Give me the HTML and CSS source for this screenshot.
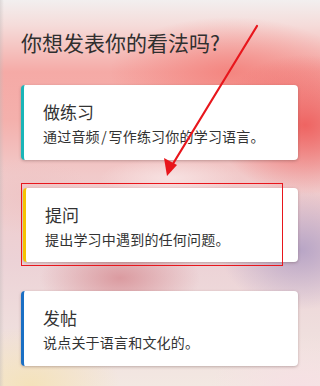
FILE: index.html
```html
<!DOCTYPE html>
<html lang="zh-CN">
<head>
<meta charset="utf-8">
<link rel="stylesheet" href="styles.css">
</head>
<body>
<div class="page">
  <h1 class="title">你想发表你的看法吗?</h1>
  <div class="cards">
    <div class="card card-practice">
      <div class="card-title">做练习</div>
      <div class="card-desc">通过音频<span class="slash">/</span>写作练习你的学习语言。</div>
    </div>
    <div class="card card-ask">
      <div class="card-title">提问</div>
      <div class="card-desc">提出学习中遇到的任何问题。</div>
      <div class="highlight"></div>
    </div>
    <div class="card card-post">
      <div class="card-title">发帖</div>
      <div class="card-desc">说点关于语言和文化的。</div>
    </div>
  </div>
  <svg class="arrow" width="320" height="386" viewBox="0 0 320 386">
    <line x1="257" y1="26" x2="171" y2="167" stroke="#e8161c" stroke-width="2.2" stroke-linecap="round"/>
    <polygon points="167,176 164,158 177,165" fill="#e8161c"/>
  </svg>
</div>
</body>
</html>
```

FILE: styles.css
```css
html, body {
  margin: 0;
  padding: 0;
}
body {
  width: 320px;
  height: 386px;
  overflow: hidden;
  font-family: "Noto Sans CJK SC", "Noto Sans", sans-serif;
  color: #333;
}
.page {
  position: relative;
  width: 320px;
  height: 386px;
  box-sizing: border-box;
  padding: 26px 22px 0 21px;
  background:
    linear-gradient(90deg, rgba(190,185,185,0.4) 0, rgba(190,185,185,0) 4px),
    radial-gradient(ellipse 90px 70px at 305px 125px, rgba(238,96,94,0.95), rgba(238,96,94,0)),
    radial-gradient(ellipse 120px 55px at 230px 72px, rgba(243,118,112,0.7), rgba(243,118,112,0)),
    radial-gradient(ellipse 80px 60px at 300px 250px, rgba(178,160,196,0.9), rgba(178,160,196,0)),
    radial-gradient(ellipse 80px 40px at 120px 278px, rgba(214,140,146,0.8), rgba(214,140,146,0)),
    radial-gradient(ellipse 90px 60px at 30px 386px, rgba(244,226,186,1), rgba(244,226,186,0)),
    radial-gradient(ellipse 90px 50px at 300px 386px, rgba(246,224,228,1), rgba(246,224,228,0)),
    radial-gradient(ellipse 60px 40px at 30px 195px, rgba(238,196,196,0.8), rgba(238,196,196,0)),
    radial-gradient(ellipse 70px 20px at 170px 178px, rgba(248,228,228,0.9), rgba(248,228,228,0)),
    linear-gradient(180deg, #f2efef 0, #f5dcda 25px, #f5aaa6 72px, #f4b0ac 120px, #f1caca 175px, #ecd2d6 260px, #efdedd 330px, #f3e8e2 386px);
}
.title {
  margin: 0;
  font-size: 21px;
  font-weight: 400;
  line-height: 32px;
  color: #2f2f2f;
}
.cards {
  display: flex;
  flex-direction: column;
  gap: 28px;
  margin-top: 27px;
}
.card {
  position: relative;
  height: 75px;
  box-sizing: border-box;
  padding: 15px 10px 0 19px;
  background: #fff;
  border-radius: 4px;
  border-left: 3px solid #1bb7b9;
  box-shadow: 0 1px 3px rgba(90,60,60,0.35);
}
.card-practice { border-left-color: #1ab5b8; }
.card-ask {
  border-left-color: #f5c300;
  margin-left: 2px;
  height: 74px;
}
.card-post { border-left-color: #1a6fc4; margin-top: 1px; }
.card-title {
  font-size: 17px;
  line-height: 24px;
  color: #333;
}
.card-desc {
  font-size: 14px;
  letter-spacing: 0.2px;
  line-height: 20px;
  color: #333;
  margin-top: 2px;
}
.slash {
  margin: 0 1.5px;
}
.highlight {
  position: absolute;
  left: -5px;
  top: -5px;
  width: 262px;
  height: 83px;
  box-sizing: border-box;
  border: 1.3px solid #e8161c;
}
.arrow {
  position: absolute;
  left: 0;
  top: 0;
}
```
